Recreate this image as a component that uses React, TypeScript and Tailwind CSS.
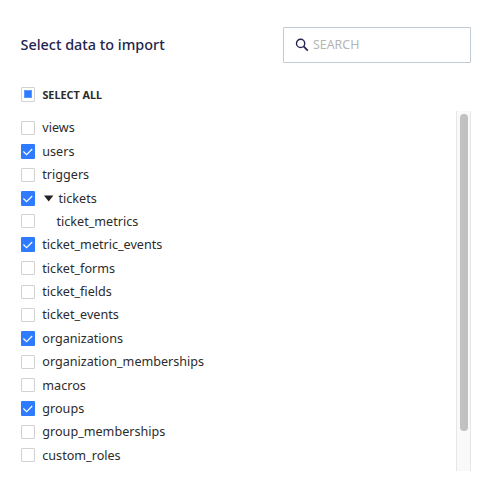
type Item = { name: string; checked?: boolean; expanded?: boolean; child?: boolean };

const items: Item[] = [
  { name: "views" },
  { name: "users", checked: true },
  { name: "triggers" },
  { name: "tickets", checked: true, expanded: true },
  { name: "ticket_metrics", child: true },
  { name: "ticket_metric_events", checked: true },
  { name: "ticket_forms" },
  { name: "ticket_fields" },
  { name: "ticket_events" },
  { name: "organizations", checked: true },
  { name: "organization_memberships" },
  { name: "macros" },
  { name: "groups", checked: true },
  { name: "group_memberships" },
  { name: "custom_roles" },
];

function Checkbox({ checked }: { checked?: boolean }) {
  if (checked) {
    return (
      <span className="flex h-[15px] w-[14px] shrink-0 items-center justify-center rounded-[1px] bg-[#2f7bff]">
        <svg width="14" height="15" viewBox="0 0 14 15" fill="none">
          <path d="M2.4 7.5 5.6 10.6 11.2 5" stroke="#fff" strokeWidth="1.15" />
        </svg>
      </span>
    );
  }
  return <span className="h-[14px] w-[14px] shrink-0 rounded-[1px] border border-[#d2d2d2] bg-white" />;
}

function Row({ item }: { item: Item }) {
  return (
    <li className="flex h-[23.38px] items-center">
      <Checkbox checked={item.checked} />
      {item.expanded && (
        <svg className="ml-[9px] mr-[4.5px] shrink-0" width="10" height="7" viewBox="0 0 10 7">
          <path d="M0 .5h9.4L4.7 6.5z" fill="#222" />
        </svg>
      )}
      <span className={item.child ? "pt-[0.8px] ml-[21.5px]" : item.expanded ? "pt-[0.8px]" : "pt-[0.8px] ml-[7.3px]"}>{item.name}</span>
    </li>
  );
}

export default function App() {
  return (
    <main className="h-[494px] w-[499px] overflow-hidden bg-white pl-[21px] pr-[28px] pt-[27px] font-['Noto_Sans',sans-serif] text-[#2b2b2b]">
      <header className="flex h-9 items-center justify-between">
        <h1 className="-ml-[0.5px] text-[14.4px] font-medium leading-5 text-[#24244d]">Select data to import</h1>
        <div className="flex h-9 w-[188px] items-center rounded-[1px] border border-[#c3cad1] pl-[11px]">
          <svg width="14" height="14" viewBox="0 0 14 14" fill="none" stroke="#24244d">
            <circle cx="5.6" cy="5.4" r="4.1" strokeWidth="1.4" />
            <path d="m8.6 8.4 4.2 4.2" strokeWidth="1.7" />
          </svg>
          <input
            aria-label="Search"
            placeholder="SEARCH"
            className="ml-[4px] w-[140px] text-[12.4px] outline-none placeholder:text-[#b5b5b5]"
          />
        </div>
      </header>
      <div className="mt-[24px] flex h-4 items-start">
        <span className="flex h-[15px] w-[14px] items-start justify-center rounded-[1px] border border-[#d2d2d2] pt-[2px]">
          <span className="h-2 w-2 border border-[#5c98ff] bg-[#2f7bff]" />
        </span>
        <span className="ml-[7.4px] text-[10.8px] font-bold leading-4">SELECT ALL</span>
      </div>
      <section className="mt-[8px] flex h-[360px] justify-between">
        <ul className="pt-[5.3px] text-[12.6px] leading-[18px]">
          {items.map((item) => (
            <Row key={item.name} item={item} />
          ))}
        </ul>
        <div className="flex w-[15px] justify-center border-x border-[#e6e6e6] bg-[#f9f9f9] pt-[3px]">
          <div className="h-[317px] w-2 rounded-full bg-[#c1c1c1]" />
        </div>
      </section>
    </main>
  );
}
